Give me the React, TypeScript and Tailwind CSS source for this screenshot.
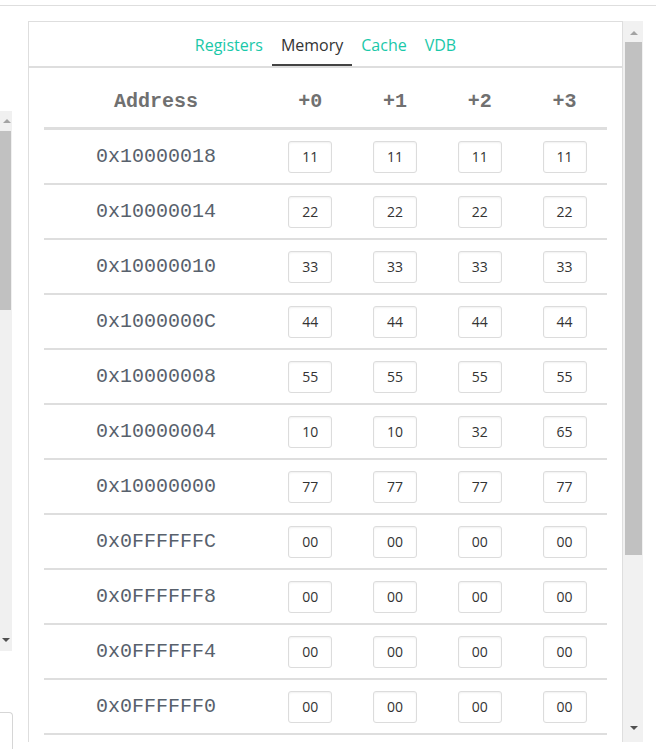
import React from 'react';

const rows: { addr: string; vals: string[] }[] = [
    { addr: '0x10000018', vals: ['11', '11', '11', '11'] },
    { addr: '0x10000014', vals: ['22', '22', '22', '22'] },
    { addr: '0x10000010', vals: ['33', '33', '33', '33'] },
    { addr: '0x1000000C', vals: ['44', '44', '44', '44'] },
    { addr: '0x10000008', vals: ['55', '55', '55', '55'] },
    { addr: '0x10000004', vals: ['10', '10', '32', '65'] },
    { addr: '0x10000000', vals: ['77', '77', '77', '77'] },
    { addr: '0x0FFFFFFC', vals: ['00', '00', '00', '00'] },
    { addr: '0x0FFFFFF8', vals: ['00', '00', '00', '00'] },
    { addr: '0x0FFFFFF4', vals: ['00', '00', '00', '00'] },
    { addr: '0x0FFFFFF0', vals: ['00', '00', '00', '00'] },
];

const tabs = ['Registers', 'Memory', 'Cache', 'VDB'];

const UpArrow = ({ dark }: { dark?: boolean }) => (
    <div className={`w-0 h-0 border-x-[4px] border-x-transparent border-b-[4px] ${dark ? 'border-b-[#505050]' : 'border-b-[#a3a3a3]'}`} />
);

const DownArrow = () => (
    <div className="w-0 h-0 border-x-[4px] border-x-transparent border-t-[4px] border-t-[#505050]" />
);

const App = () => {
    return (
        <div className="w-[656px] h-[749px] overflow-hidden bg-white font-['Open_Sans',sans-serif]">
            <div className="h-[5px]" />
            <div className="border-t border-[#dedede] flex h-[744px]">
                {/* left pane edge */}
                <div className="w-[13px] flex flex-col">
                    <div className="h-[105px]" />
                    <div className="h-[540px] w-[12px] bg-[#f0f0f0] flex flex-col">
                        <div className="h-[20px] flex items-center justify-center pl-[1px]">
                            <UpArrow />
                        </div>
                        <div className="h-[179px] w-[11px] bg-[#c1c1c1]" />
                        <div className="flex-1" />
                        <div className="h-[20px] flex items-center justify-center pb-[2px]">
                            <DownArrow />
                        </div>
                    </div>
                    <div className="h-[61px]" />
                    <div className="flex-1 border-t border-r border-[#d6d6d6] rounded-tr-[4px]" />
                </div>

                <div className="w-[15px]" />

                {/* memory panel */}
                <div className="flex flex-col">
                    <div className="h-[15px]" />
                    <div className="flex h-[721px]">
                        <div className="w-[595px] overflow-hidden">
                            <div className="border border-[#dedede] border-b-0 w-[595px] h-[721px]">
                                <div className="flex justify-center border-b-2 border-[#dedede] h-[46px]">
                                    <div className="flex">
                                        {tabs.map((t) => (
                                            <div
                                                key={t}
                                                className={`px-[9px] pt-[3px] flex items-center text-[16px] ${
                                                    t === 'Memory'
                                                        ? 'text-[#333] border-b-2 border-[#444]'
                                                        : 'text-[#1ac8a9] border-b-2 border-transparent'
                                                }`}
                                            >
                                                {t}
                                            </div>
                                        ))}
                                    </div>
                                </div>
                                <div className="px-[15px] pt-[8px]">
                                    <div className="flex h-[54px] border-b-[3px] border-[#dedede] font-['Liberation_Mono',monospace] font-bold text-[20px] text-[#707070]">
                                        <div className="w-[224px] flex items-center justify-center pt-[1px]">Address</div>
                                        {['+0', '+1', '+2', '+3'].map((h) => (
                                            <div key={h} className="flex-1 flex items-center justify-center pt-[1px]">
                                                {h}
                                            </div>
                                        ))}
                                    </div>
                                    {rows.map((r) => (
                                        <div key={r.addr} className="flex h-[55px] border-b-2 border-[#dedede]">
                                            <div className="w-[224px] flex items-center justify-center font-['Liberation_Mono',monospace] text-[20px] text-[#58616c]">
                                                {r.addr}
                                            </div>
                                            {r.vals.map((v, i) => (
                                                <div key={i} className="flex-1 flex items-center justify-center">
                                                    <div className="w-[44px] h-[32px] border border-[#dcdcdc] rounded-[3px] shadow-[inset_0_1px_2px_rgba(0,0,0,0.06)] flex items-center justify-center text-[14px] text-[#333]">
                                                        {v}
                                                    </div>
                                                </div>
                                            ))}
                                        </div>
                                    ))}
                                </div>
                            </div>
                        </div>
                        {/* right scrollbar */}
                        <div className="w-[20px] bg-[#f1f1f1] flex flex-col">
                            <div className="h-[21px] flex items-center justify-center pt-[2px] pl-[1px]">
                                <UpArrow />
                            </div>
                            <div className="h-[513px] ml-[2px] mr-[1px] bg-[#c1c1c1]" />
                            <div className="flex-1" />
                            <div className="h-[24px] flex items-center justify-center pl-[1px] pb-[4px]">
                                <DownArrow />
                            </div>
                        </div>
                    </div>
                </div>
            </div>
        </div>
    );
};

export default App;
